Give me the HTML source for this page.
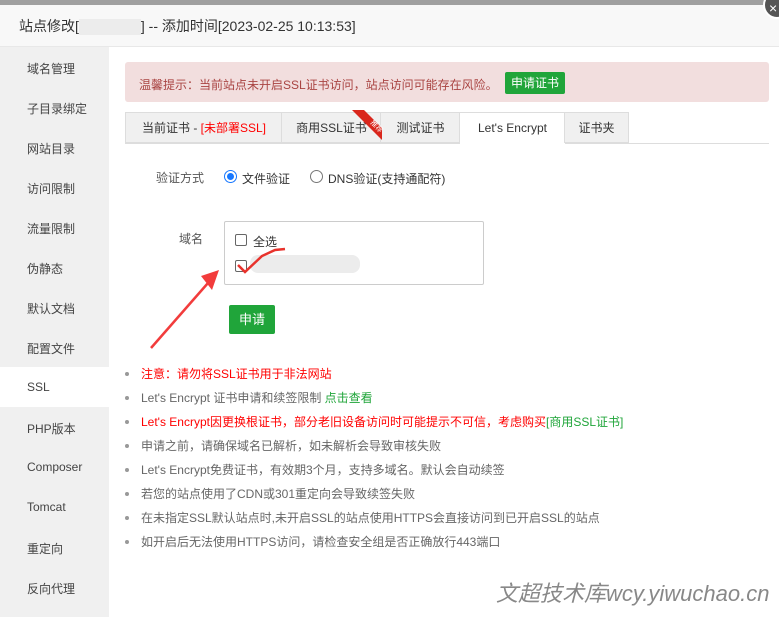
<!DOCTYPE html>
<html><head><meta charset="utf-8"><style>
*{margin:0;padding:0;box-sizing:border-box}
body{width:779px;height:617px;overflow:hidden;background:#fff;font-family:"Liberation Sans","Noto Sans CJK SC",sans-serif;font-size:12px;color:#555;position:relative}
.a{position:absolute;white-space:nowrap}
.side{position:absolute;left:0;top:47px;width:109px;height:570px;background:#f0f0f0}
.side div{position:absolute;left:27px;font-size:12px;color:#444}
.tab{position:absolute;top:112px;height:31px;border:1px solid #ddd;border-right:none;background:#f0f0f0;line-height:31px;text-align:center;font-size:12px;color:#333}
li{position:absolute;left:125px;list-style:none;font-size:12px;color:#666;white-space:nowrap}
li::before{content:"";position:absolute;left:0;top:7px;width:4px;height:4px;border-radius:2px;background:#999}
li span.t{position:absolute;left:16px;top:0}
</style></head><body>
<div class="a" style="left:0;top:0;width:779px;height:5px;background:#a0a0a0"></div>
<div class="a" style="left:0;top:5px;width:779px;height:42px;background:#f8f8f8;border-bottom:1px solid #e8e8e8"></div>
<div class="a" style="left:763px;top:-9px;width:28px;height:28px;border-radius:14px;background:#555;border:2px solid #fff"></div>
<div class="a" style="left:769px;top:0;color:#fff;font-size:14px">×</div>
<div class="a" style="left:19px;top:16px;font-size:14px;color:#333">站点修改[<span style="display:inline-block;width:62px;height:16px;background:#ececec;vertical-align:middle"></span>] -- 添加时间[2023-02-25 10:13:53]</div>
<div class="side">
<div style="top:13px">域名管理</div><div style="top:53px">子目录绑定</div><div style="top:93px">网站目录</div><div style="top:133px">访问限制</div><div style="top:173px">流量限制</div><div style="top:213px">伪静态</div><div style="top:253px">默认文档</div><div style="top:293px">配置文件</div>
<div style="left:0;top:320px;width:109px;height:40px;background:#fff"></div>
<div style="top:333px">SSL</div><div style="top:373px">PHP版本</div><div style="top:413px">Composer</div><div style="top:453px">Tomcat</div><div style="top:493px">重定向</div><div style="top:533px">反向代理</div>
</div>
<div class="a" style="left:125px;top:62px;width:644px;height:40px;background:#f2dede;border-radius:3px"></div>
<div class="a" style="left:139px;top:76px;color:#a94442">温馨提示：当前站点未开启SSL证书访问，站点访问可能存在风险。</div>
<div class="a" style="left:505px;top:72px;width:60px;height:22px;background:#20a53a;color:#fff;line-height:22px;text-align:center;border-radius:2px">申请证书</div>
<div class="a" style="left:125px;top:143px;width:644px;height:1px;background:#ddd"></div>
<div class="tab" style="left:125px;width:157px">当前证书 - <span style="color:#f00">[未部署SSL]</span></div>
<div class="tab" style="left:281px;width:100px">商用SSL证书</div>
<div class="tab" style="left:380px;width:80px">测试证书</div>
<div class="tab" style="left:459px;width:106px;background:#fff;height:32px;border-bottom:none">Let's Encrypt</div>
<div class="tab" style="left:564px;width:65px;border-right:1px solid #ddd">证书夹</div>
<svg class="a" style="left:350px;top:110px" width="34" height="32"><polygon points="2,0 14,0 32,18 32,30" fill="#d9261c"/><text x="20" y="13" fill="#fff" font-size="7" transform="rotate(45 20 13)">推荐</text></svg>
<div class="a" style="left:156px;top:169px;color:#555">验证方式</div>
<div class="a" style="left:224px;top:170px;width:13px;height:13px;border-radius:7px;border:1px solid #1677ff"></div>
<div class="a" style="left:227px;top:173px;width:7px;height:7px;border-radius:4px;background:#1677ff"></div>
<div class="a" style="left:242px;top:170px;color:#333">文件验证</div>
<div class="a" style="left:310px;top:170px;width:13px;height:13px;border-radius:7px;border:1px solid #777"></div>
<div class="a" style="left:328px;top:170px;color:#333">DNS验证(支持通配符)</div>
<div class="a" style="left:179px;top:230px">域名</div>
<div class="a" style="left:224px;top:221px;width:260px;height:64px;border:1px solid #ccc;border-radius:2px"></div>
<div class="a" style="left:235px;top:234px;width:12px;height:12px;border:1px solid #666;border-radius:2px"></div>
<div class="a" style="left:253px;top:233px;color:#333">全选</div>
<div class="a" style="left:235px;top:260px;width:12px;height:12px;border:1px solid #666;border-radius:2px"></div>
<div class="a" style="left:250px;top:255px;width:110px;height:18px;background:#ececec;border-radius:8px"></div>
<svg class="a" style="left:0;top:0" width="779" height="617"><path d="M238 265 L245 272 L262 256 L275 250 L285 249" stroke="#e8322c" stroke-width="2.5" fill="none"/><path d="M151 348 L208 283" stroke="#f23c3c" stroke-width="2.5"/><polygon points="201,276 219,270 212,290" fill="#f23c3c"/></svg>
<div class="a" style="left:229px;top:305px;width:46px;height:29px;background:#20a53a;color:#fff;line-height:29px;text-align:center;border-radius:2px;font-size:13px">申请</div>
<li style="top:365px"><span class="t" style="color:#f00">注意：请勿将SSL证书用于非法网站</span></li>
<li style="top:389px"><span class="t">Let's Encrypt 证书申请和续签限制 <span style="color:#20a53a">点击查看</span></span></li>
<li style="top:413px"><span class="t" style="color:#f00">Let's Encrypt因更换根证书，部分老旧设备访问时可能提示不可信，考虑购买<span style="color:#20a53a">[商用SSL证书]</span></span></li>
<li style="top:437px"><span class="t">申请之前，请确保域名已解析，如未解析会导致审核失败</span></li>
<li style="top:461px"><span class="t">Let's Encrypt免费证书，有效期3个月，支持多域名。默认会自动续签</span></li>
<li style="top:485px"><span class="t">若您的站点使用了CDN或301重定向会导致续签失败</span></li>
<li style="top:509px"><span class="t">在未指定SSL默认站点时,未开启SSL的站点使用HTTPS会直接访问到已开启SSL的站点</span></li>
<li style="top:533px"><span class="t">如开启后无法使用HTTPS访问，请检查安全组是否正确放行443端口</span></li>
<div class="a" style="left:496px;top:576px;font-size:22px;font-style:italic;color:#888">文超技术库wcy.yiwuchao.cn</div>
</body></html>
